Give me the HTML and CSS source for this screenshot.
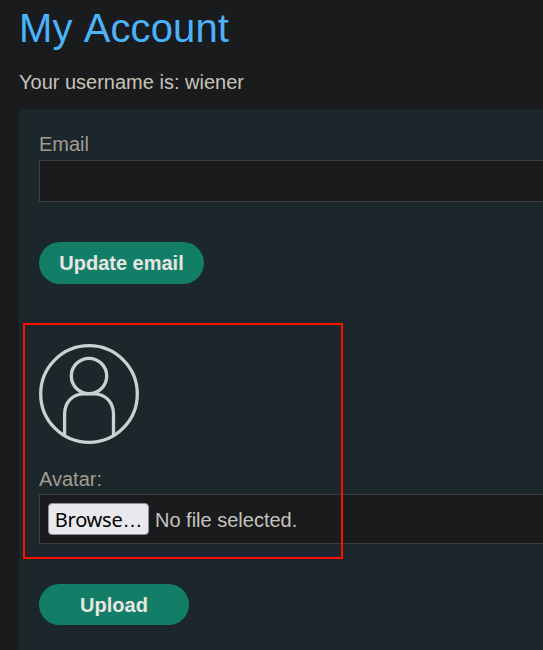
FILE: index.html
```html
<!DOCTYPE html>
<html lang="en">
<head>
<meta charset="utf-8">
<title>My Account</title>
<link rel="stylesheet" href="styles.css">
</head>
<body>
<main class="page">
  <h1 class="title">My Account</h1>
  <p class="username">Your username is: wiener</p>
  <section class="panel">
    <form class="email-form">
      <label class="label" for="email">Email</label>
      <input class="input" id="email" type="email">
      <button class="button" type="button">Update email</button>
    </form>
    <form class="avatar-form">
      <svg class="avatar" viewBox="0 0 100 100" fill="none" stroke="#cbd1d1" stroke-width="3.3">
        <circle cx="50" cy="50" r="48.3"/>
        <circle cx="50" cy="32" r="17.7"/>
        <path d="M25.6 91V70C25.6 58 34 49.8 45 49.8H55C66 49.8 74.5 58 74.5 70V91"/>
      </svg>
      <span class="label">Avatar:</span>
      <div class="file">
        <button class="browse" type="button">Browse<span class="dots">…</span></button>
        <span class="file-name">No file selected.</span>
      </div>
      <button class="button upload" type="button">Upload</button>
      <div class="highlight"></div>
    </form>
  </section>
</main>
</body>
</html>
```
FILE: styles.css
```css
* { box-sizing: border-box; }
html { background: #1a1b1c; }
body {
  margin: 0;
  height: 650px;
  overflow: hidden;
  color: #c7c3bc;
  font: 20px/24px "Liberation Sans", Arial, sans-serif;
}
.page {
  height: 650px;
  padding: 5px 0 0 19px;
  display: flex;
  flex-direction: column;
}
.title {
  margin: 0;
  color: #48b3ff;
  font-size: 40px;
  font-weight: 400;
  font-kerning: none;
  letter-spacing: 0.1px;
  line-height: 46px;
}
.username { margin: 19px 0 15px; }
.panel {
  flex: 1;
  padding: 23px 0 0 20px;
  background: #1c272b;
}
.email-form, .avatar-form {
  display: flex;
  flex-direction: column;
  align-items: flex-start;
}
.label { color: #a39c92; }
.input, .file {
  width: 100%;
  border: 1px solid #3a3e40;
  border-right: 0;
  border-radius: 0;
  background: #1a1b1c;
  outline: none;
}
.input { height: 42px; margin-top: 4px; }
.button {
  width: 165px;
  height: 42px;
  margin-top: 40px;
  padding: 0;
  border: 0;
  border-radius: 21px;
  background: #127e67;
  color: #e8e6e3;
  font: bold 20px/24px "Liberation Sans", Arial, sans-serif;
}
.avatar-form { position: relative; margin-top: 60px; }
.avatar { width: 100px; height: 100px; margin-bottom: 23px; }
.file {
  height: 50px;
  margin-top: 3px;
  padding: 0 8px;
  display: flex;
  align-items: center;
  gap: 6px;
}
.file-name { padding-top: 2px; }
.browse {
  width: 101px;
  height: 32px;
  padding: 2px 0 0;
  border: 1px solid #8f8f9d;
  border-radius: 4px;
  background: #e9e9ed;
  color: #000;
  font: 20px/28px "Noto Sans", sans-serif;
  letter-spacing: -0.25px;
  white-space: nowrap;
}
.dots { font-family: "Liberation Sans", Arial, sans-serif; }
.upload { width: 150px; height: 41px; }
.highlight {
  position: absolute;
  top: -21px;
  left: -16px;
  width: 320px;
  height: 236px;
  border: 2px solid #ff0f00;
  pointer-events: none;
}
```
